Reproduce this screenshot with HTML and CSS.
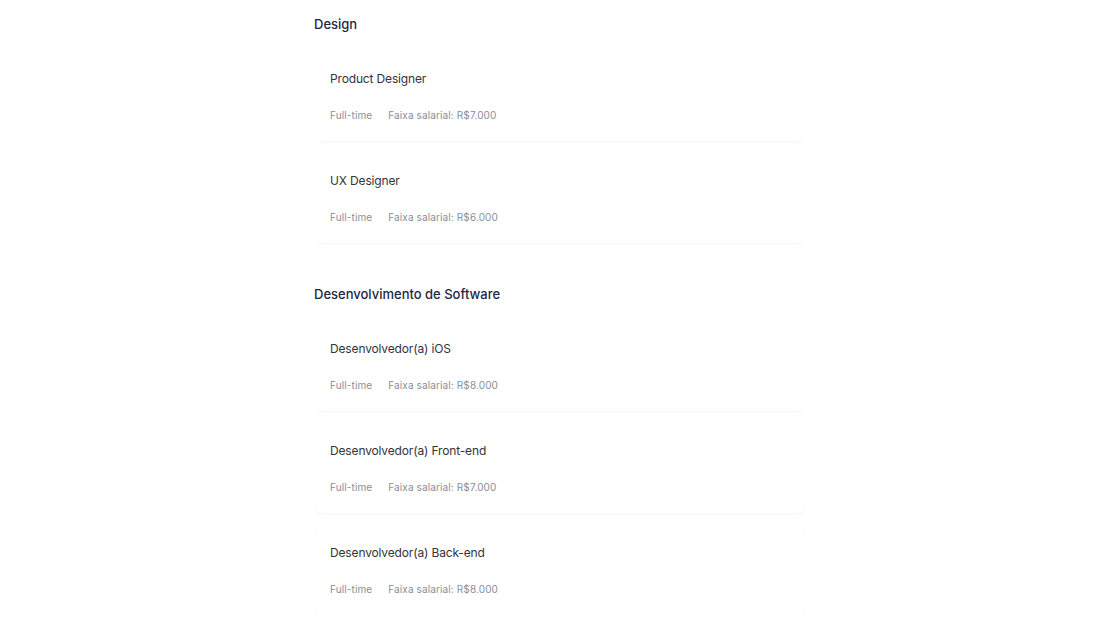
FILE: index.html
```html
<!DOCTYPE html>
<html lang="pt-BR">
<head>
<meta charset="utf-8">
<title>Vagas</title>
<link rel="stylesheet" href="styles.css">
</head>
<body>
<main class="page">
  <section class="group">
    <h2 class="group-title">Design</h2>
    <div class="list">
      <article class="job">
        <h3 class="job-title">Product Designer</h3>
        <div class="job-meta"><span>Full-time</span><span>Faixa salarial: R$7.000</span></div>
      </article>
      <article class="job">
        <h3 class="job-title">UX Designer</h3>
        <div class="job-meta"><span>Full-time</span><span>Faixa salarial: R$6.000</span></div>
      </article>
    </div>
  </section>
  <section class="group">
    <h2 class="group-title">Desenvolvimento de Software</h2>
    <div class="list">
      <article class="job">
        <h3 class="job-title">Desenvolvedor(a) iOS</h3>
        <div class="job-meta"><span>Full-time</span><span>Faixa salarial: R$8.000</span></div>
      </article>
      <article class="job">
        <h3 class="job-title">Desenvolvedor(a) Front-end</h3>
        <div class="job-meta"><span>Full-time</span><span>Faixa salarial: R$7.000</span></div>
      </article>
      <article class="job">
        <h3 class="job-title">Desenvolvedor(a) Back-end</h3>
        <div class="job-meta"><span>Full-time</span><span>Faixa salarial: R$8.000</span></div>
      </article>
    </div>
  </section>
</main>
</body>
</html>
```

FILE: styles.css
```css
* { box-sizing: border-box; }
html, body { margin: 0; padding: 0; background: #ffffff; }
body { font-family: Inter, "Noto Sans", "Liberation Sans", sans-serif; }
.page {
  width: 488px;
  margin: 0 auto;
  padding-top: 15px;
  display: flex;
  flex-direction: column;
  gap: 42px;
}
.group { display: flex; flex-direction: column; gap: 19px; }
.group-title {
  margin: 0 0 0 -2px;
  font-size: 13px;
  line-height: 18px;
  font-weight: 500;
  color: #1d2742;
}
.list { display: flex; flex-direction: column; gap: 13px; }
.job {
  height: 89px;
  padding: 19px 14px 0;
  background: #fff;
  border-radius: 6px;
  box-shadow: 0 1px 3px rgba(0, 0, 0, 0.045), 0 0 1px rgba(0, 0, 0, 0.03);
  display: flex;
  flex-direction: column;
  gap: 20px;
}
.job-title {
  margin: 0;
  font-size: 12px;
  line-height: 16px;
  font-weight: 400;
  letter-spacing: -0.15px;
  color: #333338;
}
.job-meta {
  display: flex;
  gap: 16px;
  font-size: 10px;
  line-height: 16px;
  letter-spacing: 0.12px;
  color: #8a8e97;
}
```
